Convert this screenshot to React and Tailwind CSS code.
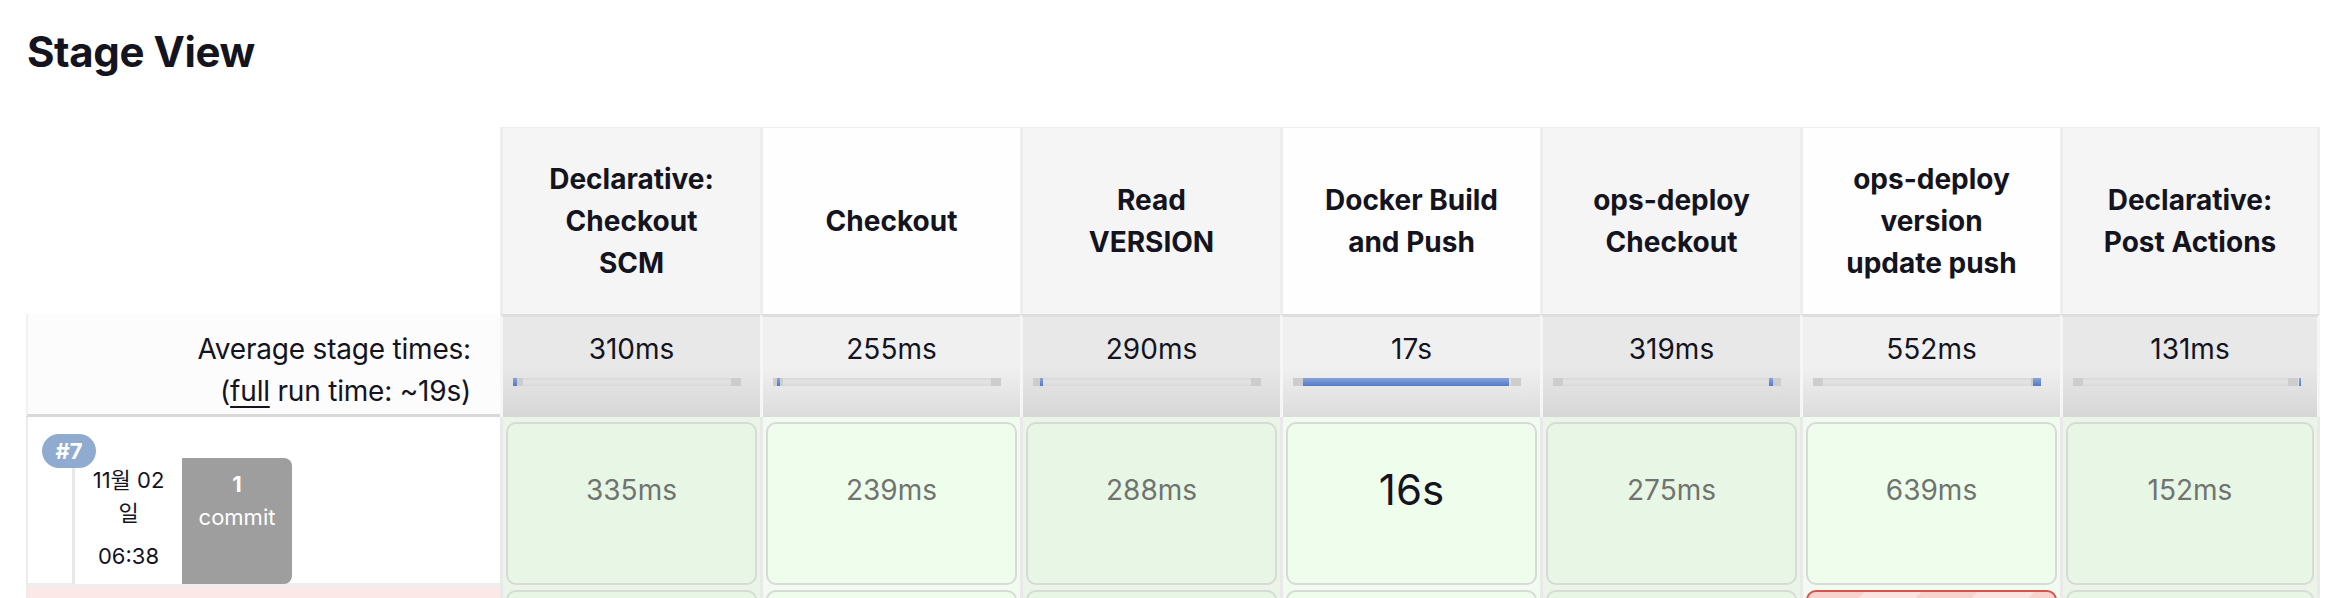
import React from 'react';

const STAGES = [
    { name: ['Declarative:', 'Checkout', 'SCM'], avg: '310ms', bar: [0, 4], run: '335ms' },
    { name: ['Checkout'], avg: '255ms', bar: [4, 3], run: '239ms' },
    { name: ['Read', 'VERSION'], avg: '290ms', bar: [7, 3], run: '288ms' },
    { name: ['Docker Build', 'and Push'], avg: '17s', bar: [10, 206], run: '16s', long: true },
    { name: ['ops-deploy', 'Checkout'], avg: '319ms', bar: [216, 4], run: '275ms' },
    { name: ['ops-deploy', 'version', 'update push'], avg: '552ms', bar: [220, 8], run: '639ms', failedNext: true },
    { name: ['Declarative:', 'Post Actions'], avg: '131ms', bar: [226, 2], run: '152ms' },
];

const ProgressBar = ({ offset, width }) => (
    <div className="relative mt-[8px] ml-[10px] mr-[19px] h-[8px] flex">
        <div className="w-[10px] bg-[#cdcdcd]" />
        <div className="flex-1 bg-linear-to-b from-[#d9d9d9] via-[#e3e3e3] to-[#d9d9d9]" />
        <div className="w-[10px] bg-[#cdcdcd]" />
        {/* blue segment sits on the track at the stage's start offset */}
        <div
            className="absolute top-0 h-[8px] bg-linear-to-b from-[#86a4dc] to-[#5579c4]"
            style={{ left: offset, width }}
        />
    </div>
);

const StageView = () => {
    return (
        <div className="w-[2342px] h-[598px] overflow-hidden bg-white font-['Inter','Noto_Sans_CJK_KR',sans-serif] text-[#14141f]">
            <h2 className="ml-[27px] mt-[31px] text-[42px] leading-[42px] font-bold tracking-[-0.4px]">Stage View</h2>

            <div className="mt-[54px] ml-[26px] grid grid-cols-[474px_repeat(7,260px)] grid-rows-[187px_103px_170px_60px]">
                {/* header row */}
                <div className="bg-white" />
                {STAGES.map((stage, i) => (
                    <div
                        key={`h-${i}`}
                        className={`flex flex-col items-center justify-center text-center border-l-[3px] border-t border-[#eeeeef] text-[28px] leading-[42px] font-bold ${i % 2 === 0 ? 'bg-[#f5f5f5]' : 'bg-[#fefefe]'} ${i === 6 ? 'border-r-[3px]' : ''}`}
                    >
                        {stage.name.map((line) => (
                            <span key={line}>{line}</span>
                        ))}
                    </div>
                ))}

                {/* average times row */}
                <div className="bg-[#fcfcfc] border-l-[2px] border-[#f1f1f1] border-b-[3px] border-b-[#d9d9d9] pt-[14px] pr-[29px] text-right text-[28px] leading-[42px] tracking-[-0.2px]">
                    <div>Average stage times:</div>
                    <div>
                        (<span className="underline underline-offset-[5px]">full</span> run time: ~19s)
                    </div>
                </div>
                {STAGES.map((stage, i) => (
                    <div
                        key={`a-${i}`}
                        className={`border-l-[3px] border-[#f6f6f6] border-t-[3px] border-t-[#dedede] pt-[11px] text-center text-[28px] leading-[42px] bg-linear-to-b ${i % 2 === 0 ? 'from-[#e8e8e8] via-[#e8e8e8] to-[#d6d6d6]' : 'from-[#f0f0f0] via-[#f0f0f0] to-[#dcdcdc]'} ${i === 6 ? 'border-r-[3px]' : ''}`}
                    >
                        <div>{stage.avg}</div>
                        <ProgressBar offset={stage.bar[0]} width={stage.bar[1]} />
                    </div>
                ))}

                {/* build #7 row */}
                <div className="relative bg-white border-l-[2px] border-[#ececec] border-b-[4px] border-b-[#eeeeee]">
                    <span className="absolute left-[14px] top-[17px] z-10 h-[34px] w-[54px] rounded-full bg-[#8fabcf] text-white text-[22px] leading-[34px] font-bold text-center">
                        #7
                    </span>
                    <div className="flex mt-[41px] ml-[44px]">
                        <div className="w-[110px] h-[126px] border-l-[3px] border-[#e8e8e8] bg-white text-center text-[22px] leading-[33px] pt-[6px]">
                            <div>11월 02</div>
                            <div>일</div>
                            <div className="mt-[10px]">06:38</div>
                        </div>
                        <div className="w-[110px] h-[126px] rounded-r-[8px] bg-[#9e9e9e] text-white text-center text-[22px] leading-[33px] pt-[10px]">
                            <div className="font-bold">1</div>
                            <div>commit</div>
                        </div>
                    </div>
                </div>
                {STAGES.map((stage, i) => (
                    <div
                        key={`r-${i}`}
                        className={`flex flex-col border-l-[3px] border-[#e9e9e9] px-[3px] pt-[5px] pb-[2px] ${i % 2 === 0 ? 'bg-[#eaf5e8]' : 'bg-[#f1fbef]'} ${i === 6 ? 'border-r-[3px]' : ''}`}
                    >
                        <div
                            className={`flex-1 rounded-[10px] border-2 border-[#d8dad8] pt-[45px] text-center leading-[42px] ${i % 2 === 0 ? 'bg-[#e8f7e5]' : 'bg-[#effdec]'} ${stage.long ? 'text-[42px] text-[#14141f]' : 'text-[28px] text-[#707470]'}`}
                        >
                            {stage.run}
                        </div>
                    </div>
                ))}

                {/* next build row, cut off by the viewport */}
                <div className="bg-[#fce8e6] border-l-[2px] border-[#ececec]" />
                {STAGES.map((stage, i) => (
                    <div
                        key={`n-${i}`}
                        className={`border-l-[3px] border-[#e9e9e9] px-[3px] pt-[3px] ${i % 2 === 0 ? 'bg-[#eaf5e8]' : 'bg-[#f1fbef]'} ${i === 6 ? 'border-r-[3px]' : ''}`}
                    >
                        {stage.failedNext ? (
                            <div className="h-[56px] rounded-[10px] border-2 border-[#d2544a] bg-[repeating-linear-gradient(135deg,#f8d3ce_0px,#f8d3ce_40px,#fbe3df_40px,#fbe3df_80px)]" />
                        ) : (
                            <div className={`h-[56px] rounded-[10px] border-2 border-[#d8dad8] ${i % 2 === 0 ? 'bg-[#e8f7e5]' : 'bg-[#effdec]'}`} />
                        )}
                    </div>
                ))}
            </div>
        </div>
    );
};

export default StageView;
